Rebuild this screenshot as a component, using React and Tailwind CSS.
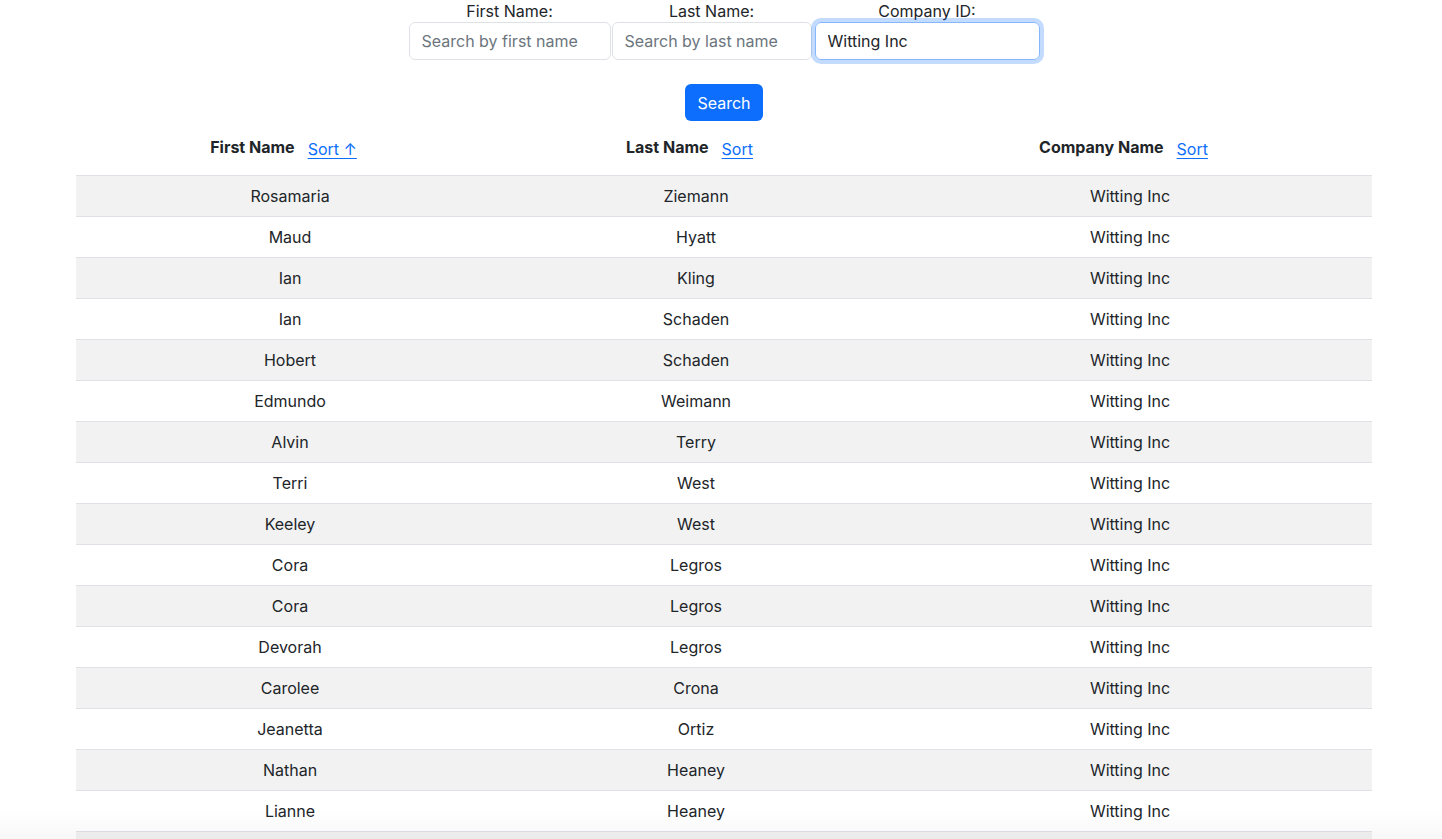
const ROWS = [
  ['Rosamaria', 'Ziemann'],
  ['Maud', 'Hyatt'],
  ['Ian', 'Kling'],
  ['Ian', 'Schaden'],
  ['Hobert', 'Schaden'],
  ['Edmundo', 'Weimann'],
  ['Alvin', 'Terry'],
  ['Terri', 'West'],
  ['Keeley', 'West'],
  ['Cora', 'Legros'],
  ['Cora', 'Legros'],
  ['Devorah', 'Legros'],
  ['Carolee', 'Crona'],
  ['Jeanetta', 'Ortiz'],
  ['Nathan', 'Heaney'],
  ['Lianne', 'Heaney'],
];

function Field({ label, placeholder, value, width, focused }) {
  return (
    <div className="flex flex-col items-center">
      <label className="text-[16px] leading-[22px] text-[#212529]">{label}</label>
      <input
        readOnly
        value={value || ''}
        placeholder={placeholder}
        className={`h-[38px] rounded-[6px] border px-[12px] text-[16px] text-[#212529] placeholder:text-[#6c757d] outline-none ${width} ${
          focused ? 'border-[#86b7fe] ring-[4px] ring-[#0d6efd]/25' : 'border-[#dee2e6]'
        }`}
      />
    </div>
  );
}

function HeadCell({ title, sort }) {
  return (
    <div className="flex justify-center gap-[13px] pt-[8px] pb-[14px] pr-[13px] border-b border-[#dee2e6]">
      <span className="font-bold leading-[24px]">{title}</span>
      <a href="#" className="text-[#0d6efd] underline underline-offset-[3px] leading-[24px] pt-[2px]">
        {sort}
      </a>
    </div>
  );
}

export default function App() {
  return (
    <div
      className="h-screen overflow-hidden bg-white pl-[6px] text-[#212529] relative"
      style={{ fontFamily: 'Inter, "Noto Sans", sans-serif' }}
    >
      {/* Search form */}
      <div className="flex justify-center">
        <div className="flex items-start gap-[1px]">
          <Field label="First Name:" placeholder="Search by first name" width="w-[202px]" />
          <Field label="Last Name:" placeholder="Search by last name" width="w-[200px]" />
          <div className="ml-[2px]">
            <Field label="Company ID:" value="Witting Inc" width="w-[225px]" focused />
          </div>
        </div>
      </div>

      <div className="flex justify-center mt-[24px]">
        <button className="h-[37px] px-[12px] rounded-[6px] bg-[#0d6efd] text-white text-[16px]">
          Search
        </button>
      </div>

      {/* Table */}
      <div className="w-[1296px] mx-auto mt-[6px] text-[16px]">
        <div className="grid grid-cols-[428px_384px_484px]">
          <HeadCell title="First Name" sort="Sort ↑" />
          <HeadCell title="Last Name" sort="Sort" />
          <HeadCell title="Company Name" sort="Sort" />
        </div>
        {ROWS.map(([first, last], i) => (
          <div
            key={i}
            className={`grid grid-cols-[428px_384px_484px] h-[41px] items-center border-b border-[#dee2e6] text-center ${
              i % 2 === 0 ? 'bg-[#f2f2f2]' : 'bg-white'
            }`}
          >
            <div>{first}</div>
            <div>{last}</div>
            <div>Witting Inc</div>
          </div>
        ))}
        <div className="h-[41px] bg-[#f2f2f2]" />
      </div>

      {/* bottom fade */}
      <div className="pointer-events-none absolute bottom-0 left-0 right-0 h-[30px] bg-gradient-to-b from-transparent to-black/[0.03]" />
    </div>
  );
}
